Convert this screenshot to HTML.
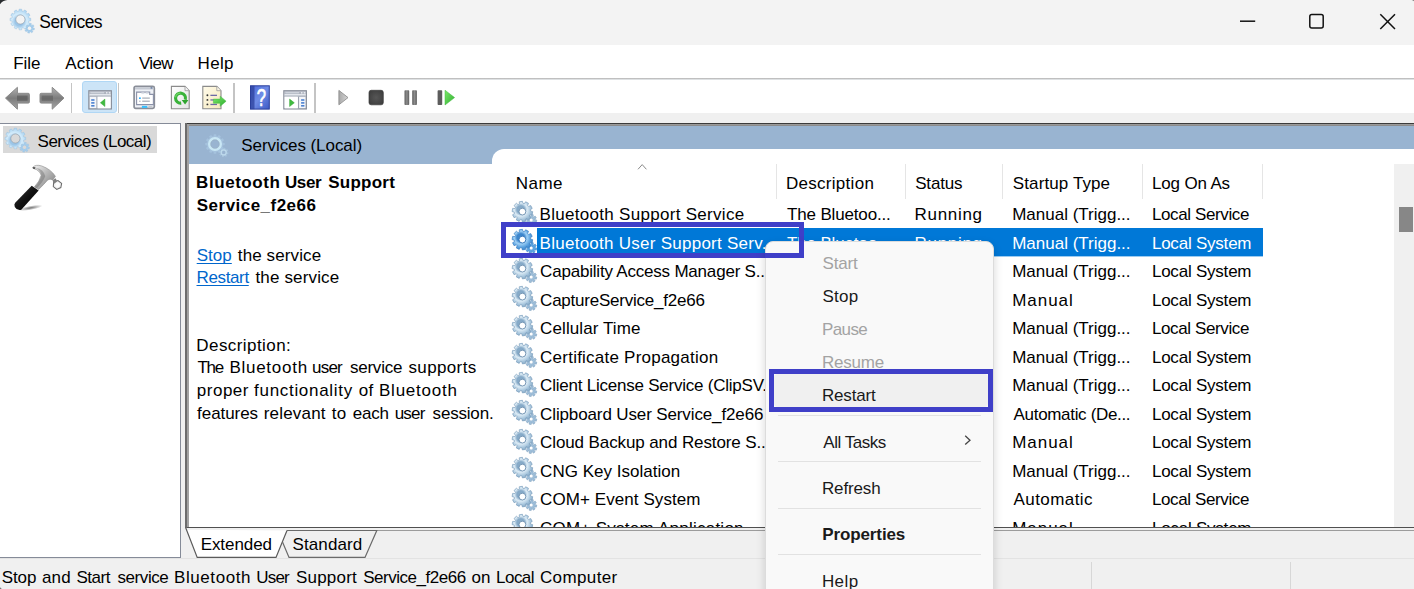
<!DOCTYPE html>
<html lang="en"><head><meta charset="utf-8"><title>Services</title>
<style>
html,body{margin:0;padding:0;}
body{width:1414px;height:589px;overflow:hidden;position:relative;background:#fff;font-family:"Liberation Sans", sans-serif;}
.t{position:absolute;white-space:pre;font-family:"Liberation Sans", sans-serif;}
.a{position:absolute;}
svg{position:absolute;overflow:visible;}
</style></head><body>
<div class="a" style="left:0;top:0;width:1414px;height:44.5px;background:#f3f3f3"></div>
<svg style="left:0;top:0" width="12" height="12"><path d="M0,0H7.4Q2.6,0.4 0,4.2Z" fill="#2a2d30"/></svg>
<svg style="left:1408px;top:0" width="6" height="6"><path d="M6,0H3.6Q5.4,0.2 6,1.2Z" fill="#777"/></svg>
<svg style="left:10.0px;top:8.9px;opacity:1.0" width="25.0" height="25.0" viewBox="0 0 25 25">
<defs><radialGradient id="g1" cx="0.45" cy="0.6" r="0.6"><stop offset="0.35" stop-color="#9cc6e8"/><stop offset="0.62" stop-color="#d4ecfb"/><stop offset="1" stop-color="#a9d3f1"/></radialGradient></defs>
<path d="M23.09,18.93 L24.50,19.30 L24.14,21.06 L22.70,20.85 L22.23,21.55 L22.97,22.80 L21.47,23.80 L20.60,22.63 L19.77,22.79 L19.40,24.20 L17.64,23.84 L17.85,22.40 L17.15,21.93 L15.90,22.67 L14.90,21.17 L16.07,20.30 L15.91,19.47 L14.50,19.10 L14.86,17.34 L16.30,17.55 L16.77,16.85 L16.03,15.60 L17.53,14.60 L18.40,15.77 L19.23,15.61 L19.60,14.20 L21.36,14.56 L21.15,16.00 L21.85,16.47 L23.10,15.73 L24.10,17.23 L22.93,18.10Z M21.20,19.20 A1.7,1.7 0 1,0 17.80,19.20 A1.7,1.7 0 1,0 21.20,19.20Z" fill="#a5cdec" stroke="#9bc0de" stroke-width="0.4" fill-rule="evenodd"/>
<circle cx="19.5" cy="19.2" r="1.7" fill="#f3f3f3"/>
<path d="M18.76,8.95 L20.72,9.25 L20.72,11.75 L18.76,12.05 L18.41,13.34 L19.97,14.58 L18.72,16.74 L16.86,16.02 L15.92,16.96 L16.64,18.82 L14.48,20.07 L13.24,18.51 L11.95,18.86 L11.65,20.82 L9.15,20.82 L8.85,18.86 L7.56,18.51 L6.32,20.07 L4.16,18.82 L4.88,16.96 L3.94,16.02 L2.08,16.74 L0.83,14.58 L2.39,13.34 L2.04,12.05 L0.08,11.75 L0.08,9.25 L2.04,8.95 L2.39,7.66 L0.83,6.42 L2.08,4.26 L3.94,4.98 L4.88,4.04 L4.16,2.18 L6.32,0.93 L7.56,2.49 L8.85,2.14 L9.15,0.18 L11.65,0.18 L11.95,2.14 L13.24,2.49 L14.48,0.93 L16.64,2.18 L15.92,4.04 L16.86,4.98 L18.72,4.26 L19.97,6.42 L18.41,7.66Z M14.80,10.50 A4.4,4.4 0 1,0 6.00,10.50 A4.4,4.4 0 1,0 14.80,10.50Z" fill="url(#g1)" stroke="#9bc0de" stroke-width="0.5" fill-rule="evenodd"/>
<circle cx="10.4" cy="10.5" r="4.6" fill="#f3f3f3" stroke="#8e9aa6" stroke-width="0.8" stroke-opacity="0.75"/>
</svg>
<span class="t" style="left:39.3px;top:12.0px;font-size:17.5px;line-height:21px;letter-spacing:-0.543px;color:#000;">Services</span>
<svg style="left:1230px;top:10px" width="180" height="24" fill="none" stroke="#111" stroke-width="1.5"><path d="M10,11.2H25.2"/><rect x="79.8" y="4.6" width="13.4" height="13.4" rx="2"/><path d="M150.3,4.3L165,19 M165,4.3L150.3,19"/></svg>
<div class="a" style="left:0;top:44.5px;width:1414px;height:33.5px;background:#fff"></div>
<span class="t" style="left:13.2px;top:54.0px;font-size:17px;line-height:20px;letter-spacing:-0.011px;color:#000;">File</span>
<span class="t" style="left:65.2px;top:54.0px;font-size:17px;line-height:20px;letter-spacing:0.198px;color:#000;">Action</span>
<span class="t" style="left:139.0px;top:54.0px;font-size:17px;line-height:20px;letter-spacing:-0.696px;color:#000;">View</span>
<span class="t" style="left:197.5px;top:54.0px;font-size:17px;line-height:20px;letter-spacing:0.366px;color:#000;">Help</span>
<div class="a" style="left:0;top:77.7px;width:1414px;height:2.6px;background:linear-gradient(#c6c6c6,#bbbbbb 45%,#e4e7ea 80%,#fbfdfe)"></div>
<div class="a" style="left:0;top:80.3px;width:1414px;height:32.9px;background:#fff"></div>
<div class="a" style="left:0;top:113.2px;width:1414px;height:10px;background:#f0f0f0"></div>
<div class="a" style="left:70.89999999999999px;top:83px;width:1.4px;height:29.5px;background:#c4c4c4"></div>
<div class="a" style="left:117.6px;top:83px;width:1.4px;height:29.5px;background:#c4c4c4"></div>
<div class="a" style="left:233.3px;top:83px;width:1.4px;height:29.5px;background:#c4c4c4"></div>
<div class="a" style="left:314.2px;top:83px;width:1.4px;height:29.5px;background:#c4c4c4"></div>
<div class="a" style="left:82px;top:81px;width:34.8px;height:32.2px;box-sizing:border-box;background:#cce4f7;border:1px solid #b0d7f5;border-radius:3px"></div>
<svg style="left:0;top:0" width="480" height="120" viewBox="0 0 480 120">
<defs>
<linearGradient id="arG" x1="0" y1="0" x2="0" y2="1"><stop offset="0" stop-color="#b2b2b2"/><stop offset="0.5" stop-color="#7c7c7c"/><stop offset="1" stop-color="#a6a6a6"/></linearGradient>
<linearGradient id="arH" x1="0" y1="0" x2="1" y2="0"><stop offset="0" stop-color="#a0a0a0" stop-opacity="0.9"/><stop offset="1" stop-color="#4e4e4e" stop-opacity="0.0"/></linearGradient>
<linearGradient id="pgG" x1="0" y1="0" x2="1" y2="1"><stop offset="0" stop-color="#ffffff"/><stop offset="1" stop-color="#e4e4e4"/></linearGradient>
<linearGradient id="pgY" x1="0" y1="0" x2="1" y2="1"><stop offset="0" stop-color="#fffbea"/><stop offset="1" stop-color="#f6e9bd"/></linearGradient>
<linearGradient id="hpG" x1="0" y1="0" x2="1" y2="1"><stop offset="0" stop-color="#4a68d8"/><stop offset="0.5" stop-color="#6f8ce6"/><stop offset="1" stop-color="#3c58c4"/></linearGradient>
<linearGradient id="grG" x1="0" y1="0" x2="1" y2="1"><stop offset="0" stop-color="#7be86a"/><stop offset="1" stop-color="#2fae2f"/></linearGradient>
<linearGradient id="plG" x1="0" y1="0" x2="1" y2="0"><stop offset="0" stop-color="#a8a8a8"/><stop offset="1" stop-color="#d6d6d6"/></linearGradient>
<linearGradient id="brG" x1="0" y1="0" x2="1" y2="0"><stop offset="0" stop-color="#5e5e5e"/><stop offset="0.5" stop-color="#8c8c8c"/><stop offset="1" stop-color="#5e5e5e"/></linearGradient>
<radialGradient id="stG" cx="0.5" cy="0.5" r="0.6"><stop offset="0" stop-color="#565656"/><stop offset="1" stop-color="#3e3e3e"/></radialGradient>
</defs>
<path d="M5.5,98.1 L17.4,87.3 V93.3 H28.2 Q29.4,93.3 29.4,94.5 V101.9 Q29.4,103.1 28.2,103.1 H17.4 V109.2 Z" fill="url(#arG)" stroke="#8a8a8a" stroke-width="1" stroke-linejoin="round"/>
<path d="M17,95.6 H27.6 V100.8 H17Z" fill="#555" opacity="0.6"/>
<path d="M64,98.1 L52.2,87.3 V93.3 H41.2 Q40,93.3 40,94.5 V101.9 Q40,103.1 41.2,103.1 H52.2 V109.2 Z" fill="url(#arG)" stroke="#8a8a8a" stroke-width="1" stroke-linejoin="round"/>
<path d="M41.8,95.6 H53 V100.8 H41.8Z" fill="#555" opacity="0.5"/>
<g transform="translate(88.3,90.2)"><rect x="0.6" y="0.6" width="22.400000000000002" height="18.1" fill="#f4f6fa" stroke="#878d99" stroke-width="1.3"/><rect x="1.2" y="1.2" width="21.200000000000003" height="3" fill="#a9afba"/><rect x="2" y="2.1" width="14" height="1" fill="#dfe3ea"/><rect x="17.6" y="1.8" width="1.6" height="1.6" fill="#e8ebf0"/><rect x="20.4" y="1.8" width="1.6" height="1.6" fill="#e8ebf0"/><rect x="1.2" y="4.2" width="21.200000000000003" height="1.1" fill="#eef1f5"/><rect x="1.2" y="5.3" width="21.200000000000003" height="1.2" fill="#9aa1ae"/><rect x="8.1" y="6.5" width="1.2" height="12" fill="#9aa1ae"/><rect x="9.3" y="6.5" width="13" height="11.6" fill="#fff"/><rect x="2.9" y="9.0" width="3.3" height="1.6" fill="#4a80d0"/><rect x="2.9" y="11.9" width="3.3" height="1.6" fill="#4a80d0"/><rect x="2.9" y="14.8" width="3.3" height="1.6" fill="#4a80d0"/><path d="M12.1,12.6 L16.6,8.9 V16.3Z" fill="#3fba3f" stroke="#35a535" stroke-width="0.5"/></g>
<g transform="translate(283.3,90.2)"><rect x="0.6" y="0.6" width="22.400000000000002" height="18.1" fill="#f4f6fa" stroke="#878d99" stroke-width="1.3"/><rect x="1.2" y="1.2" width="21.200000000000003" height="3" fill="#a9afba"/><rect x="2" y="2.1" width="14" height="1" fill="#dfe3ea"/><rect x="17.6" y="1.8" width="1.6" height="1.6" fill="#e8ebf0"/><rect x="20.4" y="1.8" width="1.6" height="1.6" fill="#e8ebf0"/><rect x="1.2" y="4.2" width="21.200000000000003" height="1.1" fill="#eef1f5"/><rect x="1.2" y="5.3" width="21.200000000000003" height="1.2" fill="#9aa1ae"/><rect x="14.6" y="6.5" width="1.2" height="12" fill="#9aa1ae"/><rect x="1.3" y="6.5" width="13.2" height="11.6" fill="#fff"/><rect x="17.8" y="9.0" width="3.3" height="1.6" fill="#4a80d0"/><rect x="17.8" y="11.9" width="3.3" height="1.6" fill="#4a80d0"/><rect x="17.8" y="14.8" width="3.3" height="1.6" fill="#4a80d0"/><path d="M11,12.6 L6.3,8.9 V16.3Z" fill="#3fba3f" stroke="#35a535" stroke-width="0.5"/></g>
<g transform="translate(133.2,85.5)"><rect x="0.9" y="0.9" width="20.2" height="22" rx="1.6" fill="#eef1f6" stroke="#8a8e98" stroke-width="1.7"/><rect x="1.8" y="1.8" width="18.4" height="2.2" fill="#c5cad3"/><rect x="17.4" y="1.6" width="1.8" height="1.6" fill="#6f84a8"/><path d="M3.4,8.9 V19.1 H20.2 V8.9 H16.5 V6.6 H3.4Z" fill="#fff" stroke="#8a91a8" stroke-width="1.1"/><rect x="8.2" y="6.9" width="3" height="1.7" fill="#dfe3ea"/><rect x="12.4" y="6.9" width="3" height="1.7" fill="#dfe3ea"/><rect x="9" y="12" width="7.6" height="1.2" fill="#a6abb6"/><rect x="9" y="15.1" width="7.6" height="1.2" fill="#a6abb6"/><rect x="5.8" y="11.9" width="1.8" height="1.6" fill="#2ab0ff"/><rect x="5.9" y="15.1" width="1.5" height="1.3" fill="#b5bac4"/><rect x="8.7" y="20.4" width="5.4" height="2" fill="#35c0ff"/><rect x="15.2" y="20.5" width="4" height="1.8" fill="#c4c7cd"/></g>
<g transform="translate(170.8,85.8)"><path d="M0.6,0.6 H14.2 L18.4,4.9 V22.9 H0.6Z" fill="url(#pgG)" stroke="#8b8b8b" stroke-width="1.1"/><path d="M14.2,0.6 V4.9 H18.4" fill="#f2f2f2" stroke="#9a9a9a" stroke-width="0.8"/><path d="M10.4,17.3 A5,5 0 1 1 14.5,13.9" fill="none" stroke="#39b239" stroke-width="3.1"/><path d="M10.9,14.2 H17.6 L14.3,18.8Z" fill="#2ea52e"/><path d="M4.7,11.6 A5,5 0 0 1 9.6,7.4" fill="none" stroke="#7ddc6f" stroke-width="1.2" opacity="0.8"/></g>
<g transform="translate(202.2,85.8)"><path d="M0.6,0.6 H14.6 L18.8,4.9 V22.9 H0.6Z" fill="url(#pgY)" stroke="#8b8b8b" stroke-width="1.1"/><path d="M14.6,0.6 V4.9 H18.8" fill="#fbf6e6" stroke="#9a9a9a" stroke-width="0.8"/><circle cx="5.2" cy="9.5" r="0.95" fill="#333"/><rect x="8.2" y="8.9" width="6.6" height="1.3" fill="#6f6aa6"/><circle cx="5.2" cy="14.1" r="0.95" fill="#333"/><rect x="8.2" y="13.5" width="6.6" height="1.3" fill="#6f6aa6"/><circle cx="5.2" cy="18.6" r="0.95" fill="#333"/><rect x="8.2" y="18.0" width="6.6" height="1.3" fill="#6f6aa6"/><path d="M11.2,13.3 H18 V10.4 L23.9,15.4 L18,20.5 V17.5 H11.2Z" fill="url(#grG)" stroke="#46b946" stroke-width="0.5"/></g>
<g transform="translate(250,85.3)"><rect x="0.5" y="0.5" width="18.8" height="23.3" fill="url(#hpG)" stroke="#2b3f9c" stroke-width="1"/><rect x="0.5" y="0.5" width="4" height="23.3" fill="#2e419c" opacity="0.75"/><g transform="translate(11.3,0) scale(0.68,1)"><text x="0" y="20.2" text-anchor="middle" font-family="Liberation Sans, sans-serif" font-size="24.5" fill="#fff" stroke="#fff" stroke-width="0.7">?</text></g></g>
<path d="M338.9,90.4 L348,97.6 L338.9,104.8Z" fill="url(#plG)" stroke="#8e8e8e" stroke-width="0.9" stroke-linejoin="round"/>
<rect x="369" y="90.3" width="14.3" height="14.5" rx="2.2" fill="url(#stG)" stroke="#3a3a3a" stroke-width="0.7"/>
<rect x="404.5" y="90.2" width="4.7" height="14.8" rx="0.8" fill="url(#brG)"/>
<rect x="412.2" y="90.2" width="4.7" height="14.8" rx="0.8" fill="url(#brG)"/>
<rect x="437.6" y="90.2" width="4.6" height="14.8" rx="0.8" fill="#5c5c5c"/>
<path d="M445,90.2 L454.6,97.6 L445,105Z" fill="url(#grG)" stroke="#3fb83f" stroke-width="0.5" stroke-linejoin="round"/>
</svg>
<div class="a" style="left:0;top:123.2px;width:1414px;height:466px;background:#f0f0f0"></div>
<div class="a" style="left:-2px;top:123.2px;width:182.9px;height:435.2px;box-sizing:border-box;background:#fff;border:1.3px solid #858b98"></div>
<div class="a" style="left:2.5px;top:126px;width:154.5px;height:26.6px;background:#d9d9d9"></div>
<svg style="left:5.3px;top:127.5px;opacity:1.0" width="25.0" height="25.0" viewBox="0 0 25 25">
<defs><radialGradient id="g2" cx="0.45" cy="0.6" r="0.6"><stop offset="0.35" stop-color="#9cc6e8"/><stop offset="0.62" stop-color="#d4ecfb"/><stop offset="1" stop-color="#a9d3f1"/></radialGradient></defs>
<path d="M23.09,18.93 L24.50,19.30 L24.14,21.06 L22.70,20.85 L22.23,21.55 L22.97,22.80 L21.47,23.80 L20.60,22.63 L19.77,22.79 L19.40,24.20 L17.64,23.84 L17.85,22.40 L17.15,21.93 L15.90,22.67 L14.90,21.17 L16.07,20.30 L15.91,19.47 L14.50,19.10 L14.86,17.34 L16.30,17.55 L16.77,16.85 L16.03,15.60 L17.53,14.60 L18.40,15.77 L19.23,15.61 L19.60,14.20 L21.36,14.56 L21.15,16.00 L21.85,16.47 L23.10,15.73 L24.10,17.23 L22.93,18.10Z M21.20,19.20 A1.7,1.7 0 1,0 17.80,19.20 A1.7,1.7 0 1,0 21.20,19.20Z" fill="#a5cdec" stroke="#9bc0de" stroke-width="0.4" fill-rule="evenodd"/>
<circle cx="19.5" cy="19.2" r="1.7" fill="#d9d9d9"/>
<path d="M18.76,8.95 L20.72,9.25 L20.72,11.75 L18.76,12.05 L18.41,13.34 L19.97,14.58 L18.72,16.74 L16.86,16.02 L15.92,16.96 L16.64,18.82 L14.48,20.07 L13.24,18.51 L11.95,18.86 L11.65,20.82 L9.15,20.82 L8.85,18.86 L7.56,18.51 L6.32,20.07 L4.16,18.82 L4.88,16.96 L3.94,16.02 L2.08,16.74 L0.83,14.58 L2.39,13.34 L2.04,12.05 L0.08,11.75 L0.08,9.25 L2.04,8.95 L2.39,7.66 L0.83,6.42 L2.08,4.26 L3.94,4.98 L4.88,4.04 L4.16,2.18 L6.32,0.93 L7.56,2.49 L8.85,2.14 L9.15,0.18 L11.65,0.18 L11.95,2.14 L13.24,2.49 L14.48,0.93 L16.64,2.18 L15.92,4.04 L16.86,4.98 L18.72,4.26 L19.97,6.42 L18.41,7.66Z M14.80,10.50 A4.4,4.4 0 1,0 6.00,10.50 A4.4,4.4 0 1,0 14.80,10.50Z" fill="url(#g2)" stroke="#9bc0de" stroke-width="0.5" fill-rule="evenodd"/>
<circle cx="10.4" cy="10.5" r="4.6" fill="#d9d9d9" stroke="#8e9aa6" stroke-width="0.8" stroke-opacity="0.75"/>
</svg>
<span class="t" style="left:37.6px;top:132.0px;font-size:17px;line-height:20px;letter-spacing:-0.521px;color:#000;">Services (Local)</span>
<svg style="left:5px;top:158px" width="70" height="60" viewBox="0 0 687 589">
<defs>
<linearGradient id="hmS" x1="0" y1="0" x2="1" y2="1"><stop offset="0" stop-color="#f4f4f4"/><stop offset="0.45" stop-color="#b9b9b9"/><stop offset="1" stop-color="#7a7a7a"/></linearGradient>
<linearGradient id="hmH" x1="0" y1="0" x2="1" y2="1"><stop offset="0" stop-color="#3a3a3a"/><stop offset="0.5" stop-color="#111"/><stop offset="1" stop-color="#000"/></linearGradient>
<radialGradient id="hmSh" cx="0.5" cy="0.5" r="0.5"><stop offset="0" stop-color="#000" stop-opacity="0.55"/><stop offset="1" stop-color="#000" stop-opacity="0"/></radialGradient>
</defs>
<ellipse cx="250" cy="490" rx="120" ry="22" fill="url(#hmSh)" transform="rotate(-10 250 490)"/>
<path d="M272,92 Q300,60 360,78 Q450,110 495,180 L470,215 Q440,200 420,215 Q380,260 330,310 L290,282 Q340,230 355,170 Q340,120 285,105 Q268,102 272,92Z" fill="url(#hmS)" stroke="#8a8a8a" stroke-width="6"/>
<path d="M478,232 L520,222 L556,250 L548,290 L508,308 L474,280Z" fill="#efefef" stroke="#6a6a6a" stroke-width="10"/>
<path d="M498,246 L522,240 L540,256 L535,280 L512,290 L494,274Z" fill="#fdfdfd"/>
<path d="M466,222 L496,200 L512,228 L484,252Z" fill="#808080"/>
<path d="M272,92 Q290,92 320,108 Q352,128 358,172 Q345,228 292,284 L312,298 Q372,240 395,180 Q380,110 300,96Z" fill="#555" opacity="0.35"/>
<path d="M272,94 Q284,84 300,96 L290,108 Q270,106 272,94Z" fill="#222" opacity="0.8"/>
<path d="M262,272 L330,318 L160,508 Q120,520 96,480 Q86,455 100,440Z" fill="url(#hmH)"/>
</svg>
<div class="a" style="left:185.2px;top:122.8px;width:1240px;height:405.4px;background:#fff"></div>
<div class="a" style="left:187px;top:124.2px;width:1230px;height:1.7px;background:linear-gradient(#a0a0a0,#858585)"></div>
<div class="a" style="left:185.2px;top:122.8px;width:1230px;height:1.4px;background:#3c3c3c"></div>
<div class="a" style="left:185.2px;top:122.8px;width:1.9px;height:405.4px;background:#6c6c6c"></div>
<div class="a" style="left:187.1px;top:124.2px;width:1.9px;height:402.6px;background:#a2a2a2"></div>
<div class="a" style="left:187.1px;top:526.8px;width:1230px;height:1.4px;background:#505050"></div>
<div class="a" style="left:287px;top:529.9px;width:1130px;height:1.3px;background:#9c9c9c"></div>
<div class="a" style="left:189px;top:125.9px;width:1226px;height:37.8px;background:#99b4d1"></div>
<div class="a" style="left:492px;top:148.6px;width:922px;height:378px;background:#fff;border-top-left-radius:12px"></div>
<svg style="left:204.5px;top:134.0px" width="24.0" height="24.0" viewBox="0 0 25 25">
<path d="M23.09,18.93 L24.50,19.30 L24.14,21.06 L22.70,20.85 L22.23,21.55 L22.97,22.80 L21.47,23.80 L20.60,22.63 L19.77,22.79 L19.40,24.20 L17.64,23.84 L17.85,22.40 L17.15,21.93 L15.90,22.67 L14.90,21.17 L16.07,20.30 L15.91,19.47 L14.50,19.10 L14.86,17.34 L16.30,17.55 L16.77,16.85 L16.03,15.60 L17.53,14.60 L18.40,15.77 L19.23,15.61 L19.60,14.20 L21.36,14.56 L21.15,16.00 L21.85,16.47 L23.10,15.73 L24.10,17.23 L22.93,18.10Z M21.20,19.20 A1.7,1.7 0 1,0 17.80,19.20 A1.7,1.7 0 1,0 21.20,19.20Z" fill="#b9d6ea" opacity="0.45" fill-rule="evenodd"/>
<path d="M18.56,8.99 L20.53,9.27 L20.53,11.73 L18.56,12.01 L18.22,13.27 L19.78,14.50 L18.56,16.62 L16.71,15.89 L15.79,16.81 L16.52,18.66 L14.40,19.88 L13.17,18.32 L11.91,18.66 L11.63,20.63 L9.17,20.63 L8.89,18.66 L7.63,18.32 L6.40,19.88 L4.28,18.66 L5.01,16.81 L4.09,15.89 L2.24,16.62 L1.02,14.50 L2.58,13.27 L2.24,12.01 L0.27,11.73 L0.27,9.27 L2.24,8.99 L2.58,7.73 L1.02,6.50 L2.24,4.38 L4.09,5.11 L5.01,4.19 L4.28,2.34 L6.40,1.12 L7.63,2.68 L8.89,2.34 L9.17,0.37 L11.63,0.37 L11.91,2.34 L13.17,2.68 L14.40,1.12 L16.52,2.34 L15.79,4.19 L16.71,5.11 L18.56,4.38 L19.78,6.50 L18.22,7.73Z M14.80,10.50 A4.4,4.4 0 1,0 6.00,10.50 A4.4,4.4 0 1,0 14.80,10.50Z" fill="#a9c8e2" opacity="0.7" fill-rule="evenodd"/>
<circle cx="10.4" cy="10.5" r="6" fill="none" stroke="#c9e7f5" stroke-width="2.6"/>
<circle cx="10.4" cy="10.5" r="4.6" fill="none" stroke="#8c9aa6" stroke-width="0.6" opacity="0.6"/>
<circle cx="19.5" cy="19.2" r="2.6" fill="none" stroke="#c4e0f0" stroke-width="1.2" opacity="0.8"/>
</svg>
<span class="t" style="left:241.3px;top:136.0px;font-size:17px;line-height:20px;letter-spacing:-0.075px;color:#000;">Services (Local)</span>
<span class="t" style="left:196.1px;top:173.0px;font-size:17px;line-height:20px;letter-spacing:0.553px;color:#000;font-weight:bold;">Bluetooth </span><span class="t" style="left:285.0px;top:173.0px;font-size:17px;line-height:20px;letter-spacing:-0.414px;color:#000;font-weight:bold;">User </span><span class="t" style="left:328.3px;top:173.0px;font-size:17px;line-height:20px;letter-spacing:0.235px;color:#000;font-weight:bold;">Support</span>
<span class="t" style="left:196.8px;top:196.0px;font-size:17px;line-height:20px;letter-spacing:0.476px;color:#000;font-weight:bold;">Service_f2e66</span>
<span class="t" style="left:196.7px;top:246.0px;font-size:17px;line-height:20px;letter-spacing:0.031px;color:#0066cc;text-decoration:underline;text-underline-offset:2px;text-decoration-thickness:1.3px;text-decoration-skip-ink:none;">Stop</span>
<span class="t" style="left:237.8px;top:246.0px;font-size:17px;line-height:20px;letter-spacing:0.115px;color:#000;">the service</span>
<span class="t" style="left:196.5px;top:268.0px;font-size:17px;line-height:20px;letter-spacing:-0.364px;color:#0066cc;text-decoration:underline;text-underline-offset:2px;text-decoration-thickness:1.3px;text-decoration-skip-ink:none;">Restart</span>
<span class="t" style="left:255.5px;top:268.0px;font-size:17px;line-height:20px;letter-spacing:0.145px;color:#000;">the service</span>
<span class="t" style="left:196.3px;top:336.0px;font-size:17px;line-height:20px;letter-spacing:0.427px;color:#000;">Description:</span>
<span class="t" style="left:197.4px;top:358.0px;font-size:17px;line-height:20px;letter-spacing:-1.200px;color:#000;">The </span><span class="t" style="left:229.4px;top:358.0px;font-size:17px;line-height:20px;letter-spacing:0.733px;color:#000;">Bluetooth </span><span class="t" style="left:312.0px;top:358.0px;font-size:17px;line-height:20px;letter-spacing:-0.776px;color:#000;">user </span><span class="t" style="left:349.9px;top:358.0px;font-size:17px;line-height:20px;letter-spacing:-0.220px;color:#000;">service </span><span class="t" style="left:408.5px;top:358.0px;font-size:17px;line-height:20px;letter-spacing:0.360px;color:#000;">supports</span>
<span class="t" style="left:196.7px;top:381.0px;font-size:17px;line-height:20px;letter-spacing:0.540px;color:#000;">proper </span><span class="t" style="left:254.1px;top:381.0px;font-size:17px;line-height:20px;letter-spacing:0.691px;color:#000;">functionality </span><span class="t" style="left:358.8px;top:381.0px;font-size:17px;line-height:20px;letter-spacing:0.165px;color:#000;">of </span><span class="t" style="left:379.0px;top:381.0px;font-size:17px;line-height:20px;letter-spacing:0.758px;color:#000;">Bluetooth</span>
<span class="t" style="left:197.1px;top:404.0px;font-size:17px;line-height:20px;letter-spacing:-0.066px;color:#000;">features </span><span class="t" style="left:263.7px;top:404.0px;font-size:17px;line-height:20px;letter-spacing:0.196px;color:#000;">relevant </span><span class="t" style="left:331.8px;top:404.0px;font-size:17px;line-height:20px;letter-spacing:0.277px;color:#000;">to </span><span class="t" style="left:352.7px;top:404.0px;font-size:17px;line-height:20px;letter-spacing:-0.215px;color:#000;">each </span><span class="t" style="left:394.7px;top:404.0px;font-size:17px;line-height:20px;letter-spacing:-0.776px;color:#000;">user </span><span class="t" style="left:432.6px;top:404.0px;font-size:17px;line-height:20px;letter-spacing:-0.192px;color:#000;">session.</span>
<div class="a" style="left:775.9px;top:163.6px;width:1.2px;height:35.6px;background:#e5e5e5"></div>
<div class="a" style="left:904.9px;top:163.6px;width:1.2px;height:35.6px;background:#e5e5e5"></div>
<div class="a" style="left:1002.1px;top:163.6px;width:1.2px;height:35.6px;background:#e5e5e5"></div>
<div class="a" style="left:1141.7px;top:163.6px;width:1.2px;height:35.6px;background:#e5e5e5"></div>
<div class="a" style="left:1261.7px;top:163.6px;width:1.2px;height:35.6px;background:#e5e5e5"></div>
<svg style="left:637px;top:163px" width="11" height="8" fill="none" stroke="#8a8a8a" stroke-width="1"><path d="M1,6.3L5.2,1.6L9.4,6.3"/></svg>
<span class="t" style="left:515.8px;top:174.0px;font-size:17px;line-height:20px;letter-spacing:0.471px;color:#000;">Name</span>
<span class="t" style="left:785.9px;top:174.0px;font-size:17px;line-height:20px;letter-spacing:0.297px;color:#000;">Description</span>
<span class="t" style="left:915.2px;top:174.0px;font-size:17px;line-height:20px;letter-spacing:-0.187px;color:#000;">Status</span>
<span class="t" style="left:1012.8px;top:174.0px;font-size:17px;line-height:20px;letter-spacing:0.107px;color:#000;">Startup Type</span>
<span class="t" style="left:1151.9px;top:174.0px;font-size:17px;line-height:20px;letter-spacing:-0.146px;color:#000;">Log On As</span>
<div class="a" style="left:492px;top:148px;width:922px;height:378.7px;overflow:hidden">
<svg style="left:20.3px;top:52.8px;opacity:1.0" width="25.0" height="25.0" viewBox="0 0 25 25">
<defs><radialGradient id="g4" cx="0.42" cy="0.4" r="0.62"><stop offset="0.3" stop-color="#86aac8"/><stop offset="0.5" stop-color="#dcebf5"/><stop offset="0.78" stop-color="#a9c7de"/><stop offset="1" stop-color="#86aac8"/></radialGradient></defs>
<path d="M23.18,18.64 L24.80,19.02 L24.37,21.16 L22.73,20.88 L22.27,21.56 L23.15,22.97 L21.32,24.18 L20.36,22.83 L19.56,22.98 L19.18,24.60 L17.04,24.17 L17.32,22.53 L16.64,22.07 L15.23,22.95 L14.02,21.12 L15.37,20.16 L15.22,19.36 L13.60,18.98 L14.03,16.84 L15.67,17.12 L16.13,16.44 L15.25,15.03 L17.08,13.82 L18.04,15.17 L18.84,15.02 L19.22,13.40 L21.36,13.83 L21.08,15.47 L21.76,15.93 L23.17,15.05 L24.38,16.88 L23.03,17.84Z M20.70,19.00 A1.5,1.5 0 1,0 17.70,19.00 A1.5,1.5 0 1,0 20.70,19.00Z" fill="#9dbdd8" stroke="#7d9fbd" stroke-width="0.5" fill-rule="evenodd"/>
<circle cx="19.2" cy="19" r="1.5" fill="#fff"/>
<path d="M18.48,10.01 L20.70,10.63 L20.19,13.81 L17.88,13.70 L17.28,14.87 L18.72,16.68 L16.43,18.95 L14.63,17.51 L13.45,18.10 L13.55,20.41 L10.37,20.90 L9.77,18.68 L8.46,18.46 L7.19,20.39 L4.32,18.92 L5.14,16.76 L4.21,15.82 L2.05,16.63 L0.59,13.75 L2.52,12.49 L2.32,11.19 L0.10,10.57 L0.61,7.39 L2.92,7.50 L3.52,6.33 L2.08,4.52 L4.37,2.25 L6.17,3.69 L7.35,3.10 L7.25,0.79 L10.43,0.30 L11.03,2.52 L12.34,2.74 L13.61,0.81 L16.48,2.28 L15.66,4.44 L16.59,5.38 L18.75,4.57 L20.21,7.45 L18.28,8.71Z M13.40,10.60 A3.0,3.0 0 1,0 7.40,10.60 A3.0,3.0 0 1,0 13.40,10.60Z" fill="url(#g4)" stroke="#7d9fbd" stroke-width="0.7" fill-rule="evenodd"/>
<circle cx="10.4" cy="10.6" r="3.4" fill="#fff" stroke="#6d90b0" stroke-width="0.9"/>
</svg>
<span class="t" style="left:47.6px;top:57.0px;font-size:17px;line-height:20px;letter-spacing:0.294px;color:#000;">Bluetooth Support Service</span>
<span class="t" style="left:295.0px;top:57.0px;font-size:17px;line-height:20px;letter-spacing:-0.155px;color:#000;">The Bluetoo...</span>
<span class="t" style="left:422.6px;top:57.0px;font-size:17px;line-height:20px;letter-spacing:0.679px;color:#000;">Running</span>
<span class="t" style="left:520.2px;top:57.0px;font-size:17px;line-height:20px;letter-spacing:-0.004px;color:#000;">Manual (Trigg...</span>
<span class="t" style="left:659.9px;top:57.0px;font-size:17px;line-height:20px;letter-spacing:-0.374px;color:#000;">Local Service</span>
<div class="a" style="left:45px;top:80.0px;width:726px;height:28px;background:#0078d7"></div>
<div class="a" style="left:45px;top:108.0px;width:726px;height:1px;background:#9ccbf0"></div>
<svg style="left:20.3px;top:81.3px;opacity:1.0" width="25.0" height="25.0" viewBox="0 0 25 25">
<defs><radialGradient id="g5" cx="0.42" cy="0.4" r="0.62"><stop offset="0.3" stop-color="#3d86cc"/><stop offset="0.5" stop-color="#9fd0f5"/><stop offset="0.78" stop-color="#58a0de"/><stop offset="1" stop-color="#3d86cc"/></radialGradient></defs>
<path d="M23.18,18.64 L24.80,19.02 L24.37,21.16 L22.73,20.88 L22.27,21.56 L23.15,22.97 L21.32,24.18 L20.36,22.83 L19.56,22.98 L19.18,24.60 L17.04,24.17 L17.32,22.53 L16.64,22.07 L15.23,22.95 L14.02,21.12 L15.37,20.16 L15.22,19.36 L13.60,18.98 L14.03,16.84 L15.67,17.12 L16.13,16.44 L15.25,15.03 L17.08,13.82 L18.04,15.17 L18.84,15.02 L19.22,13.40 L21.36,13.83 L21.08,15.47 L21.76,15.93 L23.17,15.05 L24.38,16.88 L23.03,17.84Z M20.70,19.00 A1.5,1.5 0 1,0 17.70,19.00 A1.5,1.5 0 1,0 20.70,19.00Z" fill="#5aa3e0" stroke="#3b80c4" stroke-width="0.5" fill-rule="evenodd"/>
<circle cx="19.2" cy="19" r="1.5" fill="#fff"/>
<path d="M18.48,10.01 L20.70,10.63 L20.19,13.81 L17.88,13.70 L17.28,14.87 L18.72,16.68 L16.43,18.95 L14.63,17.51 L13.45,18.10 L13.55,20.41 L10.37,20.90 L9.77,18.68 L8.46,18.46 L7.19,20.39 L4.32,18.92 L5.14,16.76 L4.21,15.82 L2.05,16.63 L0.59,13.75 L2.52,12.49 L2.32,11.19 L0.10,10.57 L0.61,7.39 L2.92,7.50 L3.52,6.33 L2.08,4.52 L4.37,2.25 L6.17,3.69 L7.35,3.10 L7.25,0.79 L10.43,0.30 L11.03,2.52 L12.34,2.74 L13.61,0.81 L16.48,2.28 L15.66,4.44 L16.59,5.38 L18.75,4.57 L20.21,7.45 L18.28,8.71Z M13.40,10.60 A3.0,3.0 0 1,0 7.40,10.60 A3.0,3.0 0 1,0 13.40,10.60Z" fill="url(#g5)" stroke="#3b80c4" stroke-width="0.7" fill-rule="evenodd"/>
<circle cx="10.4" cy="10.6" r="3.4" fill="#fff" stroke="#2f73b8" stroke-width="0.9"/>
</svg>
<span class="t" style="left:47.6px;top:86.0px;font-size:17px;line-height:20px;letter-spacing:0.260px;color:#fff;">Bluetooth User Support Serv...</span>
<span class="t" style="left:295.0px;top:86.0px;font-size:17px;line-height:20px;letter-spacing:-0.155px;color:#fff;">The Bluetoo...</span>
<span class="t" style="left:422.6px;top:86.0px;font-size:17px;line-height:20px;letter-spacing:0.679px;color:#fff;">Running</span>
<span class="t" style="left:520.2px;top:86.0px;font-size:17px;line-height:20px;letter-spacing:-0.004px;color:#fff;">Manual (Trigg...</span>
<span class="t" style="left:659.9px;top:86.0px;font-size:17px;line-height:20px;letter-spacing:-0.219px;color:#fff;">Local System</span>
<svg style="left:20.3px;top:109.8px;opacity:1.0" width="25.0" height="25.0" viewBox="0 0 25 25">
<defs><radialGradient id="g6" cx="0.42" cy="0.4" r="0.62"><stop offset="0.3" stop-color="#86aac8"/><stop offset="0.5" stop-color="#dcebf5"/><stop offset="0.78" stop-color="#a9c7de"/><stop offset="1" stop-color="#86aac8"/></radialGradient></defs>
<path d="M23.18,18.64 L24.80,19.02 L24.37,21.16 L22.73,20.88 L22.27,21.56 L23.15,22.97 L21.32,24.18 L20.36,22.83 L19.56,22.98 L19.18,24.60 L17.04,24.17 L17.32,22.53 L16.64,22.07 L15.23,22.95 L14.02,21.12 L15.37,20.16 L15.22,19.36 L13.60,18.98 L14.03,16.84 L15.67,17.12 L16.13,16.44 L15.25,15.03 L17.08,13.82 L18.04,15.17 L18.84,15.02 L19.22,13.40 L21.36,13.83 L21.08,15.47 L21.76,15.93 L23.17,15.05 L24.38,16.88 L23.03,17.84Z M20.70,19.00 A1.5,1.5 0 1,0 17.70,19.00 A1.5,1.5 0 1,0 20.70,19.00Z" fill="#9dbdd8" stroke="#7d9fbd" stroke-width="0.5" fill-rule="evenodd"/>
<circle cx="19.2" cy="19" r="1.5" fill="#fff"/>
<path d="M18.48,10.01 L20.70,10.63 L20.19,13.81 L17.88,13.70 L17.28,14.87 L18.72,16.68 L16.43,18.95 L14.63,17.51 L13.45,18.10 L13.55,20.41 L10.37,20.90 L9.77,18.68 L8.46,18.46 L7.19,20.39 L4.32,18.92 L5.14,16.76 L4.21,15.82 L2.05,16.63 L0.59,13.75 L2.52,12.49 L2.32,11.19 L0.10,10.57 L0.61,7.39 L2.92,7.50 L3.52,6.33 L2.08,4.52 L4.37,2.25 L6.17,3.69 L7.35,3.10 L7.25,0.79 L10.43,0.30 L11.03,2.52 L12.34,2.74 L13.61,0.81 L16.48,2.28 L15.66,4.44 L16.59,5.38 L18.75,4.57 L20.21,7.45 L18.28,8.71Z M13.40,10.60 A3.0,3.0 0 1,0 7.40,10.60 A3.0,3.0 0 1,0 13.40,10.60Z" fill="url(#g6)" stroke="#7d9fbd" stroke-width="0.7" fill-rule="evenodd"/>
<circle cx="10.4" cy="10.6" r="3.4" fill="#fff" stroke="#6d90b0" stroke-width="0.9"/>
</svg>
<span class="t" style="left:48.1px;top:114.0px;font-size:17px;line-height:20px;letter-spacing:-0.202px;color:#000;">Capability Access Manager S...</span>
<span class="t" style="left:520.2px;top:114.0px;font-size:17px;line-height:20px;letter-spacing:-0.004px;color:#000;">Manual (Trigg...</span>
<span class="t" style="left:659.9px;top:114.0px;font-size:17px;line-height:20px;letter-spacing:-0.219px;color:#000;">Local System</span>
<svg style="left:20.3px;top:138.3px;opacity:1.0" width="25.0" height="25.0" viewBox="0 0 25 25">
<defs><radialGradient id="g7" cx="0.42" cy="0.4" r="0.62"><stop offset="0.3" stop-color="#86aac8"/><stop offset="0.5" stop-color="#dcebf5"/><stop offset="0.78" stop-color="#a9c7de"/><stop offset="1" stop-color="#86aac8"/></radialGradient></defs>
<path d="M23.18,18.64 L24.80,19.02 L24.37,21.16 L22.73,20.88 L22.27,21.56 L23.15,22.97 L21.32,24.18 L20.36,22.83 L19.56,22.98 L19.18,24.60 L17.04,24.17 L17.32,22.53 L16.64,22.07 L15.23,22.95 L14.02,21.12 L15.37,20.16 L15.22,19.36 L13.60,18.98 L14.03,16.84 L15.67,17.12 L16.13,16.44 L15.25,15.03 L17.08,13.82 L18.04,15.17 L18.84,15.02 L19.22,13.40 L21.36,13.83 L21.08,15.47 L21.76,15.93 L23.17,15.05 L24.38,16.88 L23.03,17.84Z M20.70,19.00 A1.5,1.5 0 1,0 17.70,19.00 A1.5,1.5 0 1,0 20.70,19.00Z" fill="#9dbdd8" stroke="#7d9fbd" stroke-width="0.5" fill-rule="evenodd"/>
<circle cx="19.2" cy="19" r="1.5" fill="#fff"/>
<path d="M18.48,10.01 L20.70,10.63 L20.19,13.81 L17.88,13.70 L17.28,14.87 L18.72,16.68 L16.43,18.95 L14.63,17.51 L13.45,18.10 L13.55,20.41 L10.37,20.90 L9.77,18.68 L8.46,18.46 L7.19,20.39 L4.32,18.92 L5.14,16.76 L4.21,15.82 L2.05,16.63 L0.59,13.75 L2.52,12.49 L2.32,11.19 L0.10,10.57 L0.61,7.39 L2.92,7.50 L3.52,6.33 L2.08,4.52 L4.37,2.25 L6.17,3.69 L7.35,3.10 L7.25,0.79 L10.43,0.30 L11.03,2.52 L12.34,2.74 L13.61,0.81 L16.48,2.28 L15.66,4.44 L16.59,5.38 L18.75,4.57 L20.21,7.45 L18.28,8.71Z M13.40,10.60 A3.0,3.0 0 1,0 7.40,10.60 A3.0,3.0 0 1,0 13.40,10.60Z" fill="url(#g7)" stroke="#7d9fbd" stroke-width="0.7" fill-rule="evenodd"/>
<circle cx="10.4" cy="10.6" r="3.4" fill="#fff" stroke="#6d90b0" stroke-width="0.9"/>
</svg>
<span class="t" style="left:48.1px;top:143.0px;font-size:17px;line-height:20px;letter-spacing:-0.227px;color:#000;">CaptureService_f2e66</span>
<span class="t" style="left:520.2px;top:143.0px;font-size:17px;line-height:20px;letter-spacing:0.972px;color:#000;">Manual</span>
<span class="t" style="left:659.9px;top:143.0px;font-size:17px;line-height:20px;letter-spacing:-0.219px;color:#000;">Local System</span>
<svg style="left:20.3px;top:166.8px;opacity:1.0" width="25.0" height="25.0" viewBox="0 0 25 25">
<defs><radialGradient id="g8" cx="0.42" cy="0.4" r="0.62"><stop offset="0.3" stop-color="#86aac8"/><stop offset="0.5" stop-color="#dcebf5"/><stop offset="0.78" stop-color="#a9c7de"/><stop offset="1" stop-color="#86aac8"/></radialGradient></defs>
<path d="M23.18,18.64 L24.80,19.02 L24.37,21.16 L22.73,20.88 L22.27,21.56 L23.15,22.97 L21.32,24.18 L20.36,22.83 L19.56,22.98 L19.18,24.60 L17.04,24.17 L17.32,22.53 L16.64,22.07 L15.23,22.95 L14.02,21.12 L15.37,20.16 L15.22,19.36 L13.60,18.98 L14.03,16.84 L15.67,17.12 L16.13,16.44 L15.25,15.03 L17.08,13.82 L18.04,15.17 L18.84,15.02 L19.22,13.40 L21.36,13.83 L21.08,15.47 L21.76,15.93 L23.17,15.05 L24.38,16.88 L23.03,17.84Z M20.70,19.00 A1.5,1.5 0 1,0 17.70,19.00 A1.5,1.5 0 1,0 20.70,19.00Z" fill="#9dbdd8" stroke="#7d9fbd" stroke-width="0.5" fill-rule="evenodd"/>
<circle cx="19.2" cy="19" r="1.5" fill="#fff"/>
<path d="M18.48,10.01 L20.70,10.63 L20.19,13.81 L17.88,13.70 L17.28,14.87 L18.72,16.68 L16.43,18.95 L14.63,17.51 L13.45,18.10 L13.55,20.41 L10.37,20.90 L9.77,18.68 L8.46,18.46 L7.19,20.39 L4.32,18.92 L5.14,16.76 L4.21,15.82 L2.05,16.63 L0.59,13.75 L2.52,12.49 L2.32,11.19 L0.10,10.57 L0.61,7.39 L2.92,7.50 L3.52,6.33 L2.08,4.52 L4.37,2.25 L6.17,3.69 L7.35,3.10 L7.25,0.79 L10.43,0.30 L11.03,2.52 L12.34,2.74 L13.61,0.81 L16.48,2.28 L15.66,4.44 L16.59,5.38 L18.75,4.57 L20.21,7.45 L18.28,8.71Z M13.40,10.60 A3.0,3.0 0 1,0 7.40,10.60 A3.0,3.0 0 1,0 13.40,10.60Z" fill="url(#g8)" stroke="#7d9fbd" stroke-width="0.7" fill-rule="evenodd"/>
<circle cx="10.4" cy="10.6" r="3.4" fill="#fff" stroke="#6d90b0" stroke-width="0.9"/>
</svg>
<span class="t" style="left:48.1px;top:171.0px;font-size:17px;line-height:20px;letter-spacing:0.096px;color:#000;">Cellular Time</span>
<span class="t" style="left:520.2px;top:171.0px;font-size:17px;line-height:20px;letter-spacing:-0.004px;color:#000;">Manual (Trigg...</span>
<span class="t" style="left:659.9px;top:171.0px;font-size:17px;line-height:20px;letter-spacing:-0.374px;color:#000;">Local Service</span>
<svg style="left:20.3px;top:195.3px;opacity:1.0" width="25.0" height="25.0" viewBox="0 0 25 25">
<defs><radialGradient id="g9" cx="0.42" cy="0.4" r="0.62"><stop offset="0.3" stop-color="#86aac8"/><stop offset="0.5" stop-color="#dcebf5"/><stop offset="0.78" stop-color="#a9c7de"/><stop offset="1" stop-color="#86aac8"/></radialGradient></defs>
<path d="M23.18,18.64 L24.80,19.02 L24.37,21.16 L22.73,20.88 L22.27,21.56 L23.15,22.97 L21.32,24.18 L20.36,22.83 L19.56,22.98 L19.18,24.60 L17.04,24.17 L17.32,22.53 L16.64,22.07 L15.23,22.95 L14.02,21.12 L15.37,20.16 L15.22,19.36 L13.60,18.98 L14.03,16.84 L15.67,17.12 L16.13,16.44 L15.25,15.03 L17.08,13.82 L18.04,15.17 L18.84,15.02 L19.22,13.40 L21.36,13.83 L21.08,15.47 L21.76,15.93 L23.17,15.05 L24.38,16.88 L23.03,17.84Z M20.70,19.00 A1.5,1.5 0 1,0 17.70,19.00 A1.5,1.5 0 1,0 20.70,19.00Z" fill="#9dbdd8" stroke="#7d9fbd" stroke-width="0.5" fill-rule="evenodd"/>
<circle cx="19.2" cy="19" r="1.5" fill="#fff"/>
<path d="M18.48,10.01 L20.70,10.63 L20.19,13.81 L17.88,13.70 L17.28,14.87 L18.72,16.68 L16.43,18.95 L14.63,17.51 L13.45,18.10 L13.55,20.41 L10.37,20.90 L9.77,18.68 L8.46,18.46 L7.19,20.39 L4.32,18.92 L5.14,16.76 L4.21,15.82 L2.05,16.63 L0.59,13.75 L2.52,12.49 L2.32,11.19 L0.10,10.57 L0.61,7.39 L2.92,7.50 L3.52,6.33 L2.08,4.52 L4.37,2.25 L6.17,3.69 L7.35,3.10 L7.25,0.79 L10.43,0.30 L11.03,2.52 L12.34,2.74 L13.61,0.81 L16.48,2.28 L15.66,4.44 L16.59,5.38 L18.75,4.57 L20.21,7.45 L18.28,8.71Z M13.40,10.60 A3.0,3.0 0 1,0 7.40,10.60 A3.0,3.0 0 1,0 13.40,10.60Z" fill="url(#g9)" stroke="#7d9fbd" stroke-width="0.7" fill-rule="evenodd"/>
<circle cx="10.4" cy="10.6" r="3.4" fill="#fff" stroke="#6d90b0" stroke-width="0.9"/>
</svg>
<span class="t" style="left:48.1px;top:200.0px;font-size:17px;line-height:20px;letter-spacing:0.230px;color:#000;">Certificate Propagation</span>
<span class="t" style="left:520.2px;top:200.0px;font-size:17px;line-height:20px;letter-spacing:-0.004px;color:#000;">Manual (Trigg...</span>
<span class="t" style="left:659.9px;top:200.0px;font-size:17px;line-height:20px;letter-spacing:-0.219px;color:#000;">Local System</span>
<svg style="left:20.3px;top:223.8px;opacity:1.0" width="25.0" height="25.0" viewBox="0 0 25 25">
<defs><radialGradient id="g10" cx="0.42" cy="0.4" r="0.62"><stop offset="0.3" stop-color="#86aac8"/><stop offset="0.5" stop-color="#dcebf5"/><stop offset="0.78" stop-color="#a9c7de"/><stop offset="1" stop-color="#86aac8"/></radialGradient></defs>
<path d="M23.18,18.64 L24.80,19.02 L24.37,21.16 L22.73,20.88 L22.27,21.56 L23.15,22.97 L21.32,24.18 L20.36,22.83 L19.56,22.98 L19.18,24.60 L17.04,24.17 L17.32,22.53 L16.64,22.07 L15.23,22.95 L14.02,21.12 L15.37,20.16 L15.22,19.36 L13.60,18.98 L14.03,16.84 L15.67,17.12 L16.13,16.44 L15.25,15.03 L17.08,13.82 L18.04,15.17 L18.84,15.02 L19.22,13.40 L21.36,13.83 L21.08,15.47 L21.76,15.93 L23.17,15.05 L24.38,16.88 L23.03,17.84Z M20.70,19.00 A1.5,1.5 0 1,0 17.70,19.00 A1.5,1.5 0 1,0 20.70,19.00Z" fill="#9dbdd8" stroke="#7d9fbd" stroke-width="0.5" fill-rule="evenodd"/>
<circle cx="19.2" cy="19" r="1.5" fill="#fff"/>
<path d="M18.48,10.01 L20.70,10.63 L20.19,13.81 L17.88,13.70 L17.28,14.87 L18.72,16.68 L16.43,18.95 L14.63,17.51 L13.45,18.10 L13.55,20.41 L10.37,20.90 L9.77,18.68 L8.46,18.46 L7.19,20.39 L4.32,18.92 L5.14,16.76 L4.21,15.82 L2.05,16.63 L0.59,13.75 L2.52,12.49 L2.32,11.19 L0.10,10.57 L0.61,7.39 L2.92,7.50 L3.52,6.33 L2.08,4.52 L4.37,2.25 L6.17,3.69 L7.35,3.10 L7.25,0.79 L10.43,0.30 L11.03,2.52 L12.34,2.74 L13.61,0.81 L16.48,2.28 L15.66,4.44 L16.59,5.38 L18.75,4.57 L20.21,7.45 L18.28,8.71Z M13.40,10.60 A3.0,3.0 0 1,0 7.40,10.60 A3.0,3.0 0 1,0 13.40,10.60Z" fill="url(#g10)" stroke="#7d9fbd" stroke-width="0.7" fill-rule="evenodd"/>
<circle cx="10.4" cy="10.6" r="3.4" fill="#fff" stroke="#6d90b0" stroke-width="0.9"/>
</svg>
<span class="t" style="left:48.1px;top:228.0px;font-size:17px;line-height:20px;letter-spacing:-0.228px;color:#000;">Client License Service (ClipSV...</span>
<span class="t" style="left:520.2px;top:228.0px;font-size:17px;line-height:20px;letter-spacing:-0.004px;color:#000;">Manual (Trigg...</span>
<span class="t" style="left:659.9px;top:228.0px;font-size:17px;line-height:20px;letter-spacing:-0.219px;color:#000;">Local System</span>
<svg style="left:20.3px;top:252.3px;opacity:1.0" width="25.0" height="25.0" viewBox="0 0 25 25">
<defs><radialGradient id="g11" cx="0.42" cy="0.4" r="0.62"><stop offset="0.3" stop-color="#86aac8"/><stop offset="0.5" stop-color="#dcebf5"/><stop offset="0.78" stop-color="#a9c7de"/><stop offset="1" stop-color="#86aac8"/></radialGradient></defs>
<path d="M23.18,18.64 L24.80,19.02 L24.37,21.16 L22.73,20.88 L22.27,21.56 L23.15,22.97 L21.32,24.18 L20.36,22.83 L19.56,22.98 L19.18,24.60 L17.04,24.17 L17.32,22.53 L16.64,22.07 L15.23,22.95 L14.02,21.12 L15.37,20.16 L15.22,19.36 L13.60,18.98 L14.03,16.84 L15.67,17.12 L16.13,16.44 L15.25,15.03 L17.08,13.82 L18.04,15.17 L18.84,15.02 L19.22,13.40 L21.36,13.83 L21.08,15.47 L21.76,15.93 L23.17,15.05 L24.38,16.88 L23.03,17.84Z M20.70,19.00 A1.5,1.5 0 1,0 17.70,19.00 A1.5,1.5 0 1,0 20.70,19.00Z" fill="#9dbdd8" stroke="#7d9fbd" stroke-width="0.5" fill-rule="evenodd"/>
<circle cx="19.2" cy="19" r="1.5" fill="#fff"/>
<path d="M18.48,10.01 L20.70,10.63 L20.19,13.81 L17.88,13.70 L17.28,14.87 L18.72,16.68 L16.43,18.95 L14.63,17.51 L13.45,18.10 L13.55,20.41 L10.37,20.90 L9.77,18.68 L8.46,18.46 L7.19,20.39 L4.32,18.92 L5.14,16.76 L4.21,15.82 L2.05,16.63 L0.59,13.75 L2.52,12.49 L2.32,11.19 L0.10,10.57 L0.61,7.39 L2.92,7.50 L3.52,6.33 L2.08,4.52 L4.37,2.25 L6.17,3.69 L7.35,3.10 L7.25,0.79 L10.43,0.30 L11.03,2.52 L12.34,2.74 L13.61,0.81 L16.48,2.28 L15.66,4.44 L16.59,5.38 L18.75,4.57 L20.21,7.45 L18.28,8.71Z M13.40,10.60 A3.0,3.0 0 1,0 7.40,10.60 A3.0,3.0 0 1,0 13.40,10.60Z" fill="url(#g11)" stroke="#7d9fbd" stroke-width="0.7" fill-rule="evenodd"/>
<circle cx="10.4" cy="10.6" r="3.4" fill="#fff" stroke="#6d90b0" stroke-width="0.9"/>
</svg>
<span class="t" style="left:48.1px;top:257.0px;font-size:17px;line-height:20px;letter-spacing:-0.127px;color:#000;">Clipboard User Service_f2e66</span>
<span class="t" style="left:521.6px;top:257.0px;font-size:17px;line-height:20px;letter-spacing:-0.325px;color:#000;">Automatic (De...</span>
<span class="t" style="left:659.9px;top:257.0px;font-size:17px;line-height:20px;letter-spacing:-0.219px;color:#000;">Local System</span>
<svg style="left:20.3px;top:280.8px;opacity:1.0" width="25.0" height="25.0" viewBox="0 0 25 25">
<defs><radialGradient id="g12" cx="0.42" cy="0.4" r="0.62"><stop offset="0.3" stop-color="#86aac8"/><stop offset="0.5" stop-color="#dcebf5"/><stop offset="0.78" stop-color="#a9c7de"/><stop offset="1" stop-color="#86aac8"/></radialGradient></defs>
<path d="M23.18,18.64 L24.80,19.02 L24.37,21.16 L22.73,20.88 L22.27,21.56 L23.15,22.97 L21.32,24.18 L20.36,22.83 L19.56,22.98 L19.18,24.60 L17.04,24.17 L17.32,22.53 L16.64,22.07 L15.23,22.95 L14.02,21.12 L15.37,20.16 L15.22,19.36 L13.60,18.98 L14.03,16.84 L15.67,17.12 L16.13,16.44 L15.25,15.03 L17.08,13.82 L18.04,15.17 L18.84,15.02 L19.22,13.40 L21.36,13.83 L21.08,15.47 L21.76,15.93 L23.17,15.05 L24.38,16.88 L23.03,17.84Z M20.70,19.00 A1.5,1.5 0 1,0 17.70,19.00 A1.5,1.5 0 1,0 20.70,19.00Z" fill="#9dbdd8" stroke="#7d9fbd" stroke-width="0.5" fill-rule="evenodd"/>
<circle cx="19.2" cy="19" r="1.5" fill="#fff"/>
<path d="M18.48,10.01 L20.70,10.63 L20.19,13.81 L17.88,13.70 L17.28,14.87 L18.72,16.68 L16.43,18.95 L14.63,17.51 L13.45,18.10 L13.55,20.41 L10.37,20.90 L9.77,18.68 L8.46,18.46 L7.19,20.39 L4.32,18.92 L5.14,16.76 L4.21,15.82 L2.05,16.63 L0.59,13.75 L2.52,12.49 L2.32,11.19 L0.10,10.57 L0.61,7.39 L2.92,7.50 L3.52,6.33 L2.08,4.52 L4.37,2.25 L6.17,3.69 L7.35,3.10 L7.25,0.79 L10.43,0.30 L11.03,2.52 L12.34,2.74 L13.61,0.81 L16.48,2.28 L15.66,4.44 L16.59,5.38 L18.75,4.57 L20.21,7.45 L18.28,8.71Z M13.40,10.60 A3.0,3.0 0 1,0 7.40,10.60 A3.0,3.0 0 1,0 13.40,10.60Z" fill="url(#g12)" stroke="#7d9fbd" stroke-width="0.7" fill-rule="evenodd"/>
<circle cx="10.4" cy="10.6" r="3.4" fill="#fff" stroke="#6d90b0" stroke-width="0.9"/>
</svg>
<span class="t" style="left:48.1px;top:285.0px;font-size:17px;line-height:20px;letter-spacing:-0.110px;color:#000;">Cloud Backup and Restore S...</span>
<span class="t" style="left:520.2px;top:285.0px;font-size:17px;line-height:20px;letter-spacing:0.972px;color:#000;">Manual</span>
<span class="t" style="left:659.9px;top:285.0px;font-size:17px;line-height:20px;letter-spacing:-0.219px;color:#000;">Local System</span>
<svg style="left:20.3px;top:309.3px;opacity:1.0" width="25.0" height="25.0" viewBox="0 0 25 25">
<defs><radialGradient id="g13" cx="0.42" cy="0.4" r="0.62"><stop offset="0.3" stop-color="#86aac8"/><stop offset="0.5" stop-color="#dcebf5"/><stop offset="0.78" stop-color="#a9c7de"/><stop offset="1" stop-color="#86aac8"/></radialGradient></defs>
<path d="M23.18,18.64 L24.80,19.02 L24.37,21.16 L22.73,20.88 L22.27,21.56 L23.15,22.97 L21.32,24.18 L20.36,22.83 L19.56,22.98 L19.18,24.60 L17.04,24.17 L17.32,22.53 L16.64,22.07 L15.23,22.95 L14.02,21.12 L15.37,20.16 L15.22,19.36 L13.60,18.98 L14.03,16.84 L15.67,17.12 L16.13,16.44 L15.25,15.03 L17.08,13.82 L18.04,15.17 L18.84,15.02 L19.22,13.40 L21.36,13.83 L21.08,15.47 L21.76,15.93 L23.17,15.05 L24.38,16.88 L23.03,17.84Z M20.70,19.00 A1.5,1.5 0 1,0 17.70,19.00 A1.5,1.5 0 1,0 20.70,19.00Z" fill="#9dbdd8" stroke="#7d9fbd" stroke-width="0.5" fill-rule="evenodd"/>
<circle cx="19.2" cy="19" r="1.5" fill="#fff"/>
<path d="M18.48,10.01 L20.70,10.63 L20.19,13.81 L17.88,13.70 L17.28,14.87 L18.72,16.68 L16.43,18.95 L14.63,17.51 L13.45,18.10 L13.55,20.41 L10.37,20.90 L9.77,18.68 L8.46,18.46 L7.19,20.39 L4.32,18.92 L5.14,16.76 L4.21,15.82 L2.05,16.63 L0.59,13.75 L2.52,12.49 L2.32,11.19 L0.10,10.57 L0.61,7.39 L2.92,7.50 L3.52,6.33 L2.08,4.52 L4.37,2.25 L6.17,3.69 L7.35,3.10 L7.25,0.79 L10.43,0.30 L11.03,2.52 L12.34,2.74 L13.61,0.81 L16.48,2.28 L15.66,4.44 L16.59,5.38 L18.75,4.57 L20.21,7.45 L18.28,8.71Z M13.40,10.60 A3.0,3.0 0 1,0 7.40,10.60 A3.0,3.0 0 1,0 13.40,10.60Z" fill="url(#g13)" stroke="#7d9fbd" stroke-width="0.7" fill-rule="evenodd"/>
<circle cx="10.4" cy="10.6" r="3.4" fill="#fff" stroke="#6d90b0" stroke-width="0.9"/>
</svg>
<span class="t" style="left:48.1px;top:314.0px;font-size:17px;line-height:20px;letter-spacing:0.022px;color:#000;">CNG Key Isolation</span>
<span class="t" style="left:520.2px;top:314.0px;font-size:17px;line-height:20px;letter-spacing:-0.004px;color:#000;">Manual (Trigg...</span>
<span class="t" style="left:659.9px;top:314.0px;font-size:17px;line-height:20px;letter-spacing:-0.219px;color:#000;">Local System</span>
<svg style="left:20.3px;top:337.8px;opacity:1.0" width="25.0" height="25.0" viewBox="0 0 25 25">
<defs><radialGradient id="g14" cx="0.42" cy="0.4" r="0.62"><stop offset="0.3" stop-color="#86aac8"/><stop offset="0.5" stop-color="#dcebf5"/><stop offset="0.78" stop-color="#a9c7de"/><stop offset="1" stop-color="#86aac8"/></radialGradient></defs>
<path d="M23.18,18.64 L24.80,19.02 L24.37,21.16 L22.73,20.88 L22.27,21.56 L23.15,22.97 L21.32,24.18 L20.36,22.83 L19.56,22.98 L19.18,24.60 L17.04,24.17 L17.32,22.53 L16.64,22.07 L15.23,22.95 L14.02,21.12 L15.37,20.16 L15.22,19.36 L13.60,18.98 L14.03,16.84 L15.67,17.12 L16.13,16.44 L15.25,15.03 L17.08,13.82 L18.04,15.17 L18.84,15.02 L19.22,13.40 L21.36,13.83 L21.08,15.47 L21.76,15.93 L23.17,15.05 L24.38,16.88 L23.03,17.84Z M20.70,19.00 A1.5,1.5 0 1,0 17.70,19.00 A1.5,1.5 0 1,0 20.70,19.00Z" fill="#9dbdd8" stroke="#7d9fbd" stroke-width="0.5" fill-rule="evenodd"/>
<circle cx="19.2" cy="19" r="1.5" fill="#fff"/>
<path d="M18.48,10.01 L20.70,10.63 L20.19,13.81 L17.88,13.70 L17.28,14.87 L18.72,16.68 L16.43,18.95 L14.63,17.51 L13.45,18.10 L13.55,20.41 L10.37,20.90 L9.77,18.68 L8.46,18.46 L7.19,20.39 L4.32,18.92 L5.14,16.76 L4.21,15.82 L2.05,16.63 L0.59,13.75 L2.52,12.49 L2.32,11.19 L0.10,10.57 L0.61,7.39 L2.92,7.50 L3.52,6.33 L2.08,4.52 L4.37,2.25 L6.17,3.69 L7.35,3.10 L7.25,0.79 L10.43,0.30 L11.03,2.52 L12.34,2.74 L13.61,0.81 L16.48,2.28 L15.66,4.44 L16.59,5.38 L18.75,4.57 L20.21,7.45 L18.28,8.71Z M13.40,10.60 A3.0,3.0 0 1,0 7.40,10.60 A3.0,3.0 0 1,0 13.40,10.60Z" fill="url(#g14)" stroke="#7d9fbd" stroke-width="0.7" fill-rule="evenodd"/>
<circle cx="10.4" cy="10.6" r="3.4" fill="#fff" stroke="#6d90b0" stroke-width="0.9"/>
</svg>
<span class="t" style="left:48.1px;top:342.0px;font-size:17px;line-height:20px;letter-spacing:0.077px;color:#000;">COM+ Event System</span>
<span class="t" style="left:521.6px;top:342.0px;font-size:17px;line-height:20px;letter-spacing:0.417px;color:#000;">Automatic</span>
<span class="t" style="left:659.9px;top:342.0px;font-size:17px;line-height:20px;letter-spacing:-0.374px;color:#000;">Local Service</span>
<svg style="left:20.3px;top:366.3px;opacity:1.0" width="25.0" height="25.0" viewBox="0 0 25 25">
<defs><radialGradient id="g15" cx="0.42" cy="0.4" r="0.62"><stop offset="0.3" stop-color="#86aac8"/><stop offset="0.5" stop-color="#dcebf5"/><stop offset="0.78" stop-color="#a9c7de"/><stop offset="1" stop-color="#86aac8"/></radialGradient></defs>
<path d="M23.18,18.64 L24.80,19.02 L24.37,21.16 L22.73,20.88 L22.27,21.56 L23.15,22.97 L21.32,24.18 L20.36,22.83 L19.56,22.98 L19.18,24.60 L17.04,24.17 L17.32,22.53 L16.64,22.07 L15.23,22.95 L14.02,21.12 L15.37,20.16 L15.22,19.36 L13.60,18.98 L14.03,16.84 L15.67,17.12 L16.13,16.44 L15.25,15.03 L17.08,13.82 L18.04,15.17 L18.84,15.02 L19.22,13.40 L21.36,13.83 L21.08,15.47 L21.76,15.93 L23.17,15.05 L24.38,16.88 L23.03,17.84Z M20.70,19.00 A1.5,1.5 0 1,0 17.70,19.00 A1.5,1.5 0 1,0 20.70,19.00Z" fill="#9dbdd8" stroke="#7d9fbd" stroke-width="0.5" fill-rule="evenodd"/>
<circle cx="19.2" cy="19" r="1.5" fill="#fff"/>
<path d="M18.48,10.01 L20.70,10.63 L20.19,13.81 L17.88,13.70 L17.28,14.87 L18.72,16.68 L16.43,18.95 L14.63,17.51 L13.45,18.10 L13.55,20.41 L10.37,20.90 L9.77,18.68 L8.46,18.46 L7.19,20.39 L4.32,18.92 L5.14,16.76 L4.21,15.82 L2.05,16.63 L0.59,13.75 L2.52,12.49 L2.32,11.19 L0.10,10.57 L0.61,7.39 L2.92,7.50 L3.52,6.33 L2.08,4.52 L4.37,2.25 L6.17,3.69 L7.35,3.10 L7.25,0.79 L10.43,0.30 L11.03,2.52 L12.34,2.74 L13.61,0.81 L16.48,2.28 L15.66,4.44 L16.59,5.38 L18.75,4.57 L20.21,7.45 L18.28,8.71Z M13.40,10.60 A3.0,3.0 0 1,0 7.40,10.60 A3.0,3.0 0 1,0 13.40,10.60Z" fill="url(#g15)" stroke="#7d9fbd" stroke-width="0.7" fill-rule="evenodd"/>
<circle cx="10.4" cy="10.6" r="3.4" fill="#fff" stroke="#6d90b0" stroke-width="0.9"/>
</svg>
<span class="t" style="left:48.1px;top:371.0px;font-size:17px;line-height:20px;letter-spacing:0.251px;color:#000;">COM+ System Application</span>
<span class="t" style="left:520.2px;top:371.0px;font-size:17px;line-height:20px;letter-spacing:0.972px;color:#000;">Manual</span>
<span class="t" style="left:659.9px;top:371.0px;font-size:17px;line-height:20px;letter-spacing:-0.219px;color:#000;">Local System</span>
</div>
<div class="a" style="left:1394px;top:163.6px;width:20px;height:363.1px;background:#f0f0f0"></div>
<div class="a" style="left:1399.4px;top:206.9px;width:13.6px;height:25.6px;background:#878787"></div>
<svg style="left:180px;top:526px" width="220" height="36">
<path d="M6,3.8 L17.2,31.4 H96 L107,4.5" fill="#fff" stroke="none"/>
<path d="M5.6,1.5 L17.2,31.4 H96 L107,4.5" fill="none" stroke="#5a5a5a" stroke-width="1.2"/>
<path d="M107,4.5 H196.8 L185,31.4 H109 L102.5,16" fill="none" stroke="#6a6a6a" stroke-width="1.2"/>
</svg>
<span class="t" style="left:200.7px;top:535.0px;font-size:17px;line-height:20px;letter-spacing:-0.076px;color:#000;">Extended</span>
<span class="t" style="left:292.5px;top:535.0px;font-size:17px;line-height:20px;letter-spacing:0.115px;color:#000;">Standard</span>
<div class="a" style="left:0;top:558px;width:1414px;height:1.2px;background:#e3e3e3"></div>
<div class="a" style="left:1090.7px;top:561.5px;width:1.3px;height:28px;background:#d7d7d7"></div>
<div class="a" style="left:1290.1000000000001px;top:561.5px;width:1.3px;height:28px;background:#d7d7d7"></div>
<span class="t" style="left:1.7px;top:568.0px;font-size:17px;line-height:20px;letter-spacing:-0.102px;color:#000;">Stop </span><span class="t" style="left:41.9px;top:568.0px;font-size:17px;line-height:20px;letter-spacing:0.228px;color:#000;">and </span><span class="t" style="left:76.4px;top:568.0px;font-size:17px;line-height:20px;letter-spacing:-0.472px;color:#000;">Start </span><span class="t" style="left:117.5px;top:568.0px;font-size:17px;line-height:20px;letter-spacing:-0.420px;color:#000;">service </span><span class="t" style="left:174.0px;top:568.0px;font-size:17px;line-height:20px;letter-spacing:0.583px;color:#000;">Bluetooth </span><span class="t" style="left:256.2px;top:568.0px;font-size:17px;line-height:20px;letter-spacing:-0.765px;color:#000;">User </span><span class="t" style="left:295.9px;top:568.0px;font-size:17px;line-height:20px;letter-spacing:0.229px;color:#000;">Support </span><span class="t" style="left:363.2px;top:568.0px;font-size:17px;line-height:20px;letter-spacing:-0.476px;color:#000;">Service_f2e66 </span><span class="t" style="left:471.5px;top:568.0px;font-size:17px;line-height:20px;letter-spacing:0.110px;color:#000;">on </span><span class="t" style="left:496.1px;top:568.0px;font-size:17px;line-height:20px;letter-spacing:-0.556px;color:#000;">Local </span><span class="t" style="left:539.9px;top:568.0px;font-size:17px;line-height:20px;letter-spacing:0.390px;color:#000;">Computer</span>
<svg style="left:0;top:581px" width="8" height="8"><path d="M0,8V6Q0.4,7.6 2,8Z" fill="#666"/></svg>
<div class="a" style="left:501px;top:222px;width:303px;height:35.5px;box-sizing:border-box;border:5px solid #3f3fc8"></div>
<div class="a" style="left:765.4px;top:241.1px;width:229px;height:360px;box-sizing:border-box;background:#f9f9f9;border:1px solid #dcdcdc;border-radius:8px;box-shadow:0 4px 10px rgba(0,0,0,0.16)"></div>
<div class="a" style="left:765px;top:241px;width:39px;height:16.5px;overflow:hidden"><div class="a" style="left:-264px;top:-19px;width:303px;height:35.5px;box-sizing:border-box;border:5px solid #3f3fc8"></div></div>
<span class="t" style="left:822.5px;top:254.0px;font-size:17px;line-height:20px;letter-spacing:-0.197px;color:#a3a3a3;">Start</span>
<span class="t" style="left:822.5px;top:287.0px;font-size:17px;line-height:20px;letter-spacing:0.264px;color:#1a1a1a;">Stop</span>
<span class="t" style="left:821.9px;top:320.0px;font-size:17px;line-height:20px;letter-spacing:-0.586px;color:#a3a3a3;">Pause</span>
<span class="t" style="left:821.9px;top:353.0px;font-size:17px;line-height:20px;letter-spacing:-0.208px;color:#a3a3a3;">Resume</span>
<div class="a" style="left:773.8px;top:374px;width:214.2px;height:32.8px;background:#f0f0f0;border-radius:4px"></div>
<div class="a" style="left:768.8px;top:369px;width:224.2px;height:42.8px;box-sizing:border-box;border:5px solid #3f3fc8"></div>
<span class="t" style="left:821.9px;top:386.0px;font-size:17px;line-height:20px;letter-spacing:-0.148px;color:#1a1a1a;">Restart</span>
<div class="a" style="left:778.3px;top:415.0px;width:203.2px;height:1.2px;background:#e2e2e2"></div>
<div class="a" style="left:778.3px;top:460.79999999999995px;width:203.2px;height:1.2px;background:#e2e2e2"></div>
<div class="a" style="left:778.3px;top:507.9px;width:203.2px;height:1.2px;background:#e2e2e2"></div>
<div class="a" style="left:778.3px;top:553.8px;width:203.2px;height:1.2px;background:#e2e2e2"></div>
<span class="t" style="left:823.3px;top:433.0px;font-size:17px;line-height:20px;letter-spacing:-0.472px;color:#1a1a1a;">All Tasks</span>
<svg style="left:962px;top:433px" width="12" height="14" fill="none" stroke="#444" stroke-width="1.3"><path d="M3.2,2.8L8,7.2L3.2,11.6"/></svg>
<span class="t" style="left:821.9px;top:479.0px;font-size:17px;line-height:20px;letter-spacing:-0.121px;color:#1a1a1a;">Refresh</span>
<span class="t" style="left:822.2px;top:525.0px;font-size:17px;line-height:20px;letter-spacing:-0.107px;color:#1a1a1a;font-weight:bold;">Properties</span>
<span class="t" style="left:821.9px;top:572.0px;font-size:17px;line-height:20px;letter-spacing:0.432px;color:#1a1a1a;">Help</span>
</body></html>
